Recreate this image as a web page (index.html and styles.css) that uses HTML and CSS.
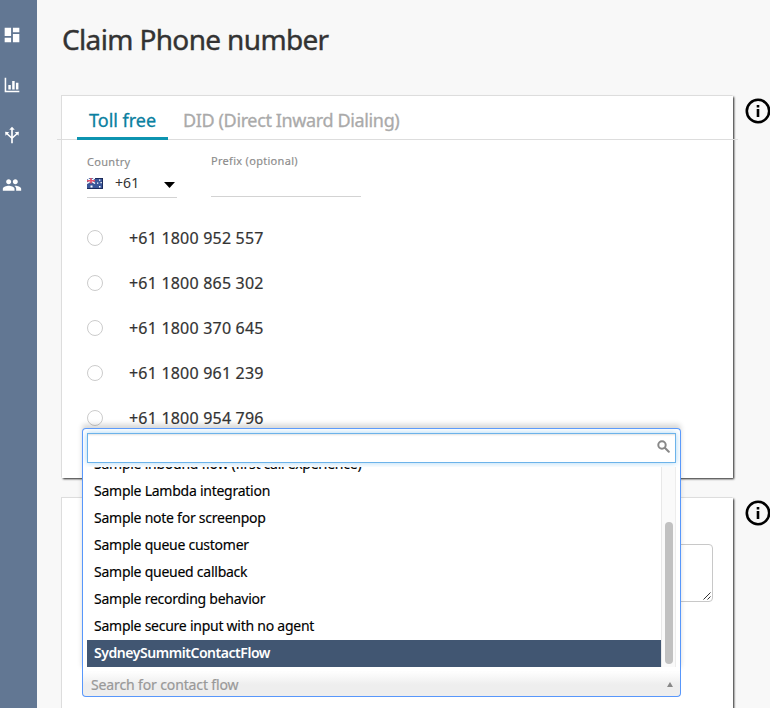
FILE: index.html
```html
<!DOCTYPE html>
<html lang="en">
<head>
<meta charset="utf-8">
<title>Claim Phone number</title>
<link rel="stylesheet" href="styles.css">
</head>
<body>
<nav class="sidebar">
  <svg class="nav-icon" viewBox="0 0 24 24"><path d="M4 4h7v9H4zM13 4h7v5h-7zM13 11h7v9h-7zM4 15h7v5H4z"/></svg>
  <svg class="nav-icon" viewBox="0 0 24 24"><path d="M4 4h1.700v14.200H20V20H4zM8 12h2.700v5H8zM12.200 7.500h2.700V17h-2.700zM16.300 9.500H19V17h-2.700z"/></svg>
  <svg class="nav-icon" viewBox="0 0 24 24"><path d="M12 3l3 3.400h-2.100v7.300l3.600-3.300L15 9l4.500-.5-.4 4.300-1.400-1.300-4.800 4.400V21h-1.800v-5.100l-4.800-4.400-1.400 1.300L4.500 8.500 9 9l-1.500 1.400 3.600 3.300V6.400H9z"/></svg>
  <svg class="nav-icon people" viewBox="0 0 24 24"><path d="M16 11c1.660 0 2.990-1.340 2.990-3S17.660 5 16 5s-3 1.340-3 3 1.340 3 3 3zm-8 0c1.660 0 2.990-1.340 2.990-3S9.660 5 8 5 5 6.340 5 8s1.340 3 3 3zm0 2c-2.330 0-7 1.170-7 3.500V19h14v-2.500C15 14.170 10.330 13 8 13zm8 0c-.29 0-.62.020-.97.050 1.160.840 1.970 1.970 1.970 3.450V19h6v-2.500c0-2.330-4.670-3.500-7-3.500z"/></svg>
</nav>
<main class="main">
  <h1 class="title">Claim Phone number</h1>
  <div class="row">
    <section class="card numbers">
      <div class="tabs">
        <div class="tab active">Toll free</div>
        <div class="tab did">DID (Direct Inward Dialing)</div>
      </div>
      <div class="fields">
        <div class="field country">
          <label class="label">Country</label>
          <div class="country-value">
            <svg class="flag" viewBox="0 0 16 11"><path fill="#3a5699" d="M0 0h16v11H0z"/><path stroke="#fff" stroke-width="1.500" d="M0 0l8 5.500M8 0L0 5.500"/><path stroke="#e8516a" stroke-width="1.500" d="M4 0v5.500M0 2.700h8"/><path fill="#fff" d="M3.500 7.500h2v2h-2zM12 1.500h1.300v1.300H12zM10 4.500h1.300v1.300H10zM13.500 4h1.300v1.300h-1.300zM12 8h1.500v1.500H12z"/><path fill="none" stroke="#14204c" d="M16 .5H8M0 10.500h15.500V0" opacity=".8"/></svg>
            <span class="code">+61</span>
            <svg class="caret" viewBox="0 0 11 6"><path d="M0 0h11L5.500 6z"/></svg>
          </div>
        </div>
        <div class="field prefix"><label class="label">Prefix (optional)</label></div>
      </div>
      <div class="options">
        <div class="option"><i class="radio"></i><span>+61 1800 952 557</span></div>
        <div class="option"><i class="radio"></i><span>+61 1800 865 302</span></div>
        <div class="option"><i class="radio"></i><span>+61 1800 370 645</span></div>
        <div class="option"><i class="radio"></i><span>+61 1800 961 239</span></div>
        <div class="option"><i class="radio"></i><span>+61 1800 954 796</span></div>
      </div>
    </section>
    <svg class="info" viewBox="0 0 26 26"><circle cx="13" cy="13" r="11.200"/><path d="M11.700 7h2.600v2.500h-2.600zM11.700 11h2.600v8h-2.600z"/></svg>
  </div>
  <div class="row">
    <section class="card details">
      <div class="textarea"><svg class="grip" viewBox="0 0 8 8"><path d="M.5 7.500l7-7M4.500 7.500l3-3"/></svg></div>
      <div class="select">
        <span class="select-text">Search for contact flow</span>
        <svg class="select-arrow" viewBox="0 0 6 5"><path d="M3 0l3 5H0z"/></svg>
        <div class="dropdown">
          <div class="search">
            <svg class="glass" viewBox="0 0 13 13"><circle cx="5" cy="5" r="3.700"/><path d="M7.800 7.800l4 4"/></svg>
          </div>
          <div class="list">
            <div class="items">
              <div class="item">Sample inbound flow (first call experience)</div>
              <div class="item">Sample Lambda integration</div>
              <div class="item">Sample note for screenpop</div>
              <div class="item">Sample queue customer</div>
              <div class="item">Sample queued callback</div>
              <div class="item">Sample recording behavior</div>
              <div class="item">Sample secure input with no agent</div>
              <div class="item selected">SydneySummitContactFlow</div>
            </div>
            <div class="track"><div class="thumb"></div></div>
          </div>
        </div>
      </div>
    </section>
    <svg class="info" viewBox="0 0 26 26"><circle cx="13" cy="13" r="11.200"/><path d="M11.700 7h2.600v2.500h-2.600zM11.700 11h2.600v8h-2.600z"/></svg>
  </div>
</main>
</body>
</html>
```
FILE: styles.css
```css
* { box-sizing: border-box; }
body { margin: 0; height: 708px; overflow: hidden; display: flex; background: #f8f8f8; font-family: "Noto Sans", sans-serif; color: #333; white-space: nowrap; }
.sidebar { width: 37px; flex: none; background: #627793; padding: 24px 0 0 1px; display: flex; flex-direction: column; gap: 28px; }
.nav-icon { width: 22px; height: 22px; fill: #fff; display: block; }
.nav-icon.people { width: 20px; height: 22px; margin-left: 1px; }
.main { flex: none; width: 733px; padding-left: 25px; }
.title { margin: 0; height: 96px; padding-top: 19px; font-size: 28px; line-height: 40px; font-weight: 400; letter-spacing: -.65px; -webkit-text-stroke: .4px #333; }
.row { display: flex; align-items: flex-start; margin-bottom: 20px; }
.card { width: 671px; flex: none; background: #fff; box-shadow: -1px -1px 0 #ddd, 1px 1px 2px #222; }
.numbers { height: 382px; }
.info { width: 26px; height: 26px; flex: none; margin: 2px 0 0 12px; }
.info circle { fill: none; stroke: #000; stroke-width: 2.6; }
.tabs { margin: 0 -5px; height: 44px; padding-left: 20px; display: flex; border-bottom: 1px solid #ddd; }
.tab { height: 44px; padding: 0 12px; font-size: 18px; line-height: 48px; color: #aaa; -webkit-text-stroke: .3px currentColor; }
.active { width: 91px; color: #0a80a0; border-bottom: 3px solid #0d94b0; }
.did { padding-left: 15px; letter-spacing: -.37px; }
.fields { display: flex; height: 75px; padding: 12px 25px 0; gap: 34px; }
.label { display: block; font-size: 11px; line-height: 20px; letter-spacing: .3px; color: #8c8c8c; -webkit-text-stroke: .15px currentColor; }
.country { width: 90px; height: 46px; border-bottom: 1px solid #d3d3d3; }
.country-value { display: flex; align-items: center; height: 22px; }
.flag { width: 16px; height: 11px; }
.code { margin-left: 12px; width: 49px; font-size: 14px; line-height: 20px; letter-spacing: .1px; }
.caret { width: 11px; height: 6px; margin-top: 3px; }
.prefix { width: 150px; height: 46px; border-bottom: 1px solid #d3d3d3; margin-top: -1px; }
.options { padding-left: 25px; }
.option { height: 45px; display: flex; align-items: center; font-size: 16px; gap: 26px; }
.option span { letter-spacing: .2px; -webkit-text-stroke: .2px #333; }
.radio { width: 16px; height: 16px; border: 1px solid #ccc; border-radius: 50%; }
.details { height: 230px; padding: 46px 20px 0; }
.textarea { height: 58px; width: 631px; border: 1px solid #c8c8c8; border-radius: 4px; display: flex; align-items: flex-end; justify-content: flex-end; padding: 1px; }
.grip { width: 8px; height: 8px; fill: none; stroke: #333; }
.select { position: relative; margin-top: 69px; width: 599px; height: 26px; border: 1px solid #5897fb; border-top: 0; border-radius: 0 0 4px 4px; background: linear-gradient(#fff, #eee 55%); display: flex; align-items: center; justify-content: space-between; padding: 2px 7px 0 8px; font-size: 14px; color: #999; }
.select-text { line-height: 24px; letter-spacing: -.13px; -webkit-text-stroke: .2px #999; }
.select-arrow { width: 6px; height: 5px; fill: #888; }
.dropdown { position: absolute; left: -1px; bottom: 25px; width: 599px; height: 243px; padding: 4px; border: 1px solid #5897fb; border-bottom: 0; border-radius: 4px 4px 0 0; background: #fff; box-shadow: 0 -4px 5px rgba(0,0,0,.15); }
.search { height: 30px; border: 1px solid #6cb3ea; box-shadow: 0 0 6px #a9d5f5, inset 0 2px 2px -1px rgba(0,0,0,.12); display: flex; justify-content: flex-end; padding: 6px 5px; }
.glass { width: 13px; height: 13px; fill: none; stroke: #888; stroke-width: 2; stroke-linecap: round; }
.list { position: relative; display: flex; height: 200px; margin-top: 4px; overflow: hidden; align-items: flex-end; background: #fff; }
.items { flex: 1; }
.item { height: 27px; line-height: 25px; padding-left: 7px; font-size: 14px; letter-spacing: -.25px; color: #000; -webkit-text-stroke: .15px currentColor; }
.selected { background: #415672; color: #fff; font-weight: 600; letter-spacing: -.45px; -webkit-text-stroke: 0; }
.track { width: 15px; height: 200px; border-left: 1px solid #e8e8e8; border-right: 1px solid #ededed; background: #fafafa; padding: 55px 3px 0; }
.thumb { width: 8px; height: 142px; border-radius: 4px; background: #c1c1c1; }
```
